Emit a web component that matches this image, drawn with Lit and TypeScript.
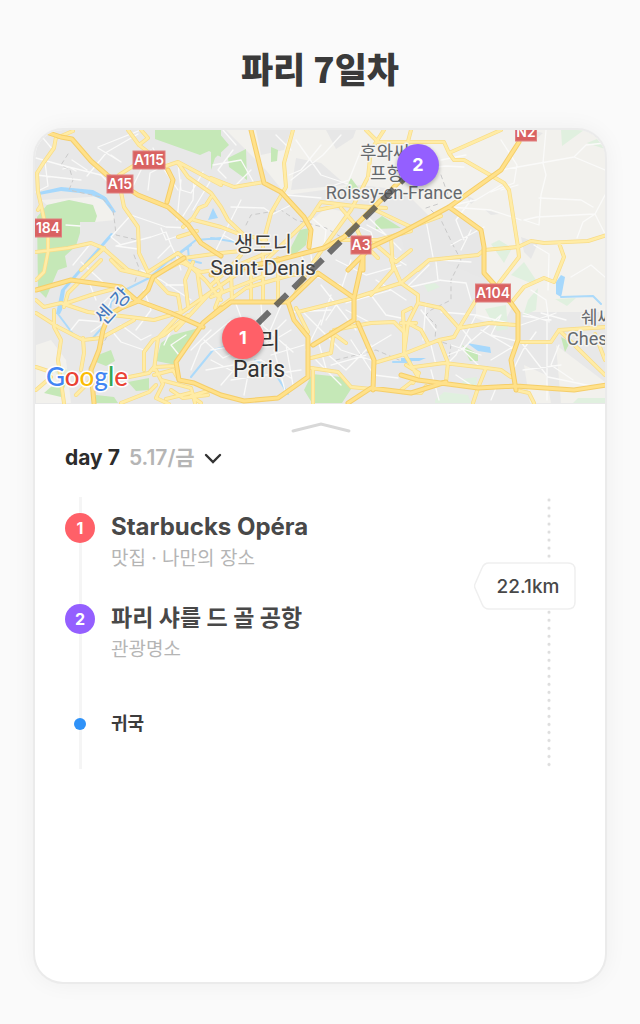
import { LitElement, html, svg, css } from "lit";
import { customElement, property } from "lit/decorators.js";

const MAJOR =
  "M48,133L60,137L71,139L90,161L106,175L137,195L167,207L187,225L200,243L220,256" +
  "M35,290L70,280L120,287L135,300L170,313L202,327" +
  "M183,258L152,277L147,290L135,302L120,308L108,315L102,330L98,350L90,370L93,403" +
  "M220,308L202,323L175,362L178,380L193,383L220,395L243,401L277,398L307,377L307,337L293,320L287,302L230,302L210,317" +
  "M287,302L317,273L353,298M353,298L353,320L312,345M362,258L353,298" +
  "M400,180L370,210L343,237L323,248L277,260L210,275" +
  "M518,142L500,170L448,207L400,233L370,247L347,270" +
  "M448,207L480,230L483,247L483,273L510,303L517,313L517,340L510,360L515,390" +
  "M347,403L370,388L410,393L445,382M400,375L417,380L477,388L515,386L573,390L606,385" +
  "M357,323L373,360L372,390M250,130L263,183L280,192L303,217L310,230L308,247M362,243L362,270" +
  "M167,170L172,180L166,202";

const MINOR =
  "M72,131L58,137M55,137L53,148L43,162L36,173L37,192L40,205L37,210M40,205L47,237L47,252L43,272L35,280" +
  "M127,130L138,145L147,152M140,130L147,138L138,145M118,175L137,163M120,192L123,207L137,227L138,253L147,272" +
  "M165,166L177,162L220,185M177,163L187,177L210,193L220,207L227,220L243,235L265,240" +
  "M210,197L205,205L198,208L192,218L182,227M193,220L220,227L243,236M196,231L177,237" +
  "M35,252L67,248L90,243L102,248L127,270L152,277M103,248L80,270M147,272L177,253L183,258L220,253L250,250" +
  "M100,260L67,293L63,307M35,300L43,307L60,303L87,312L153,320L180,312M35,313L57,327L82,340L100,338L133,320" +
  "M110,260L120,270L152,277M63,304L90,295L120,287" +
  "M152,277L167,293L177,295L180,313L157,338L153,370M220,285L180,313M183,260L205,281L220,300" +
  "M160,272L180,262L200,272L230,268L268,252M187,306L184,280L192,262M200,298L196,270M175,330L210,292L245,268M214,276L221,290L214,308" +
  "M128,377L148,373L153,367L175,366M152,340L143,352L143,370M152,340L163,335L187,315M82,338L83,353L80,370" +
  "M53,310L53,327L60,340L57,360L63,403M35,367L50,372M35,390L50,377M155,370L162,384L155,398L168,404M160,380L190,388L194,403M170,390L182,398L207,395M165,399L189,393M153,375L172,370L178,380" +
  "M210,178L233,187L263,182M292,130L283,163L285,187L270,213L262,243L262,260L262,302" +
  "M210,297L253,280L265,275M250,266L250,302M277,258L277,300M230,270L231,302M210,285L227,270L240,255M215,310L245,288L290,275L317,273" +
  "M365,130L377,142L400,142L443,142L448,153L500,130M383,130L370,150L367,177L350,210L323,247L307,270L292,298" +
  "M267,258L310,217L320,202L370,208L410,227L440,216M317,210L340,205L385,208" +
  "M340,208L353,223L362,243M337,240L377,240L410,231M373,243L395,262L410,250M390,237L392,270L370,295M362,243L377,258" +
  "M410,130L404,153M448,153L453,160L463,160L503,183L508,190L517,247L518,257L498,283" +
  "M417,270L428,260L477,255L483,250L517,247L530,241L543,243L587,241L606,235M558,243L563,257L553,282L543,278L523,287L510,303" +
  "M390,260L400,283L417,295L417,303L407,323L403,353L417,377L400,390M428,260L400,283L353,298L297,312" +
  "M417,303L440,308L458,328L453,337L438,340L400,355L373,363M475,300L458,328L488,323L515,325" +
  "M330,332L345,343M333,330L370,323L393,322L403,332L403,355M410,308L402,312L403,332M407,323L420,330L427,343M400,323L415,323" +
  "M310,358L330,353L333,330M310,368L337,372L350,387L370,389M312,368L312,403M295,308L307,332" +
  "M520,342L550,342L558,330L606,327M558,330L604,375M594,334L604,360M515,390L528,393L533,403" +
  "M413,367L443,363L485,368L500,370L510,377M485,368L477,388L472,403M438,340L447,363L445,382M400,392L420,393L425,386" +
  "M412,383L418,373L405,365M210,390L190,396L200,403M120,403L148,392L155,385M90,380L75,395";

const STREETS =
  "M42,138L52,150M35,158L60,165L100,175L106,181M35,192L47,186L44,162M97,147L140,130M97,148L120,162L110,155M86,176L106,152L137,134M62,169L68,167L75,171M150,150L130,190M152,148L160,165L177,190M147,190L149,173L168,163M177,163L180,190L190,193L202,172M176,220L180,180M182,216L192,200L193,180M210,180L192,210M35,175L80,180M110,237L130,215L165,227L190,228M115,246L150,237L165,232L170,245L157,258M115,246L137,249M110,237L120,245M170,245L177,260L180,270M160,228L165,240L180,235M79,226L65,225M71,160L86,170M72,265L90,243M80,262L105,285" +
  "M110,300L100,325L90,332M110,330L120,342L143,350M120,325L140,340L150,335M143,290L150,310L135,330M165,285L185,285M163,345L170,330M100,305L115,290M140,270L160,280L190,300M185,335L170,345L178,355M210,330L190,350M95,300L88,282M70,330L78,320L103,322M203,340L222,358L240,350M210,360L235,373M205,370L260,360L290,378M190,370L200,345L230,320M235,304L241,320M260,304L262,326L292,352M290,330L265,345M285,320L270,335M270,355L303,345M267,345L260,325M280,305L263,345M230,380L300,370M220,385L250,350M243,395L248,370M273,350L285,394M285,345L292,385M210,350L240,345" +
  "M295,140L320,175L350,185M320,145L300,170L288,175M340,135L322,155L290,180M360,150L348,180L325,188M270,215L290,205M275,135L290,150M285,195L320,198M240,200L215,250M250,170L233,187M253,183L240,160L212,165M235,145L222,130M232,150L217,170L225,178M230,207L263,208L270,213M222,235L250,250M310,217L325,230L323,247M350,223L370,232L373,243M366,225L385,235M365,215L400,250M300,255L310,275L340,285M310,255L312,270M335,260L365,275L400,265M380,250L405,265M370,295L385,315L400,318M375,280L405,300M345,310L370,323M320,285L355,330M300,310L340,350L370,360M320,320L305,350M290,312L330,310M345,303L390,290M330,295L320,325M340,290L350,260M325,353L345,370L370,345M365,355L330,365M317,340L326,372M350,340L373,375L397,378M315,360L340,385M390,335L365,350M335,305L325,320" +
  "M427,168L445,166L463,167M440,160L465,155M500,170L545,162L573,157L604,170M500,140L516,165L513,183L490,192M573,157L585,145L604,143M545,130L542,163L545,175L540,195L538,225L523,220M538,198L580,200L592,207M523,220L536,217L594,214L604,234M594,214L582,222L576,238M604,195L594,214M448,207L490,210L520,220M453,205L475,200L500,185M517,185L500,190M470,200L455,220L463,240M425,220L432,257M483,227L450,245M470,230L460,250M440,260L470,262M533,245L548,254L547,290M435,262L437,280L465,283M428,265L405,288L440,280M465,283L470,300M475,290L490,282M530,290L545,300L548,322M522,313L546,321M522,316L550,320M500,315L490,335L520,342M458,325L470,340L462,350L480,368M440,312L475,315L515,325M475,315L455,355L447,363M500,315L460,350L447,355M480,330L515,350M546,320L546,400M520,342L547,377L595,387M535,332L522,350L512,370M558,345L550,365L572,380M522,370L560,365M450,345L480,355M570,277L590,265L604,277M540,313L565,320M520,325L555,313M490,360L520,342M430,345L435,365M420,310L435,330M425,303L422,340M430,370L438,400M495,388L490,400M455,375L470,385";

const PARKS =
  "M154,130H220V157L208,151L199,155L154,139Z M36,217L46,205L68,200L92,205L96,216L94,222L79,222L79,233L75,246L64,256L66,267L57,270L45,298L37,290Z" +
  "M227,158L245,149L246,180L228,167Z M270,147L277,150L276,161L270,162Z M210,130L218,133L228,145L214,158L210,170Z M350,178L359,190L345,188Z M299,230L308,228L305,245L292,256L288,251Z" +
  "M374,221L381,216L400,228L375,229Z M311,374L340,377L352,386L341,403H311L303,390Z M171,335L202,327L175,365L155,361L160,343Z M127,382L148,378V390L135,391Z M97,355L110,350L114,361L105,366L95,362Z M51,386L65,383L60,397L43,393Z M461,345L477,354V361H469Z M560,337L569,342L564,352Z M95,395L113,397L117,403H95Z";
const PARKS_PALE =
  "M560,130H583L561,146Z M586,143L596,139L604,149Z M510,275L523,262L535,280L532,284Z M484,309L505,305L507,329L496,331L491,322Z M527,300L537,288L535,310L522,316Z M423,285L434,283L439,287L427,292Z M434,400L443,392L467,395L470,403H434Z M554,299L575,298L566,306Z M572,403L577,398H604V403Z M490,244L498,240L511,248L503,263Z M462,379L476,377L475,388L460,388Z M50,368L70,370L60,378Z";
const RURAL =
  "M225,130H605V312H520L475,268L482,233L448,207L430,218L402,190L360,185L285,195L265,170Z M305,225L325,208L345,212L322,248L310,250Z M40,200L105,196L114,220L94,222L92,205L68,200L46,205Z M35,345L50,340L65,360L70,403H35Z M475,290L515,300L500,328L475,318Z M523,365L545,375L550,403H529Z M555,345L604,382V403H560Z";
const BLOCKS =
  "M255,130H290L283,150L260,155Z M325,130H355L352,138L335,149Z M400,235L448,210L482,230L484,280L440,260L410,285Z M295,158L320,163L345,185L290,190Z M483,209L498,214L490,215Z M520,237L537,243L530,259L523,252Z M530,130L542,133L534,140Z M465,195L475,200L470,204Z";
const WATER =
  "M38,192L60,187L92,190L105,197L115,212L112,213L102,200L88,194L60,191L38,195Z M207,220L212,208L217,218Z M466,343L489,347L490,353L477,351Z M555,282L560,275L564,277L561,293L560,297L555,294Z M400,358L425,358L418,361H400Z M55,314L60,290L110,233L113,234L64,290L61,310L59,314Z";
const RIVERS =
  "M57,314L72,334M90,340L108,320L110,302L120,292L148,278L165,263L195,240L220,238M187,248L188,260L200,263M190,377L212,350L224,347M254,360L272,370L287,394M560,297L592,296L600,304M210,238L235,242M392,362H410M170,260L190,245";
const RAIL =
  "M67,154L60,165L69,170L72,180L68,190L100,197L112,210L114,225L115,235L137,240M133,255L138,268L133,285M110,330L95,355L88,368M245,225L250,215L280,210L295,220L325,228L345,240M430,210L440,220L452,245L460,260L450,280L450,300L430,310L425,315L435,325L434,340L450,345L447,365M335,360L375,350L398,360M440,175L447,195M425,208L440,203";

interface Stop {
  order: number;
  name: string;
  kind: string;
  tone: string;
}

@customElement("route-map")
class RouteMap extends LitElement {
  static styles = css`
    :host { display: block; }
    .map { display: block; width: 100%; height: 274px; }
    .fill { stroke: none; }
    .line { fill: none; stroke-linejoin: round; stroke-linecap: round; }
    .label { font-family: Roboto, "Noto Sans CJK KR", sans-serif; text-anchor: middle; paint-order: stroke; stroke: #f5f4f1; stroke-width: 3px; stroke-linejoin: round; }
    .start { text-anchor: start; }
    .city { fill: #3c3c3c; font-size: 21px; }
    .capital { fill: #333; font-size: 23px; }
    .town { fill: #65696d; font-size: 18px; }
    .river { fill: #4478bd; font-size: 20px; }
    .shield { fill: #d96262; stroke: #e08080; stroke-width: 1px; }
    .code { font: 600 14px Inter, sans-serif; fill: #fff; text-anchor: middle; }
    .pin { filter: drop-shadow(0 2px 2px rgba(0, 0, 0, 0.3)); }
    .pin-number { font: 700 18px Inter, sans-serif; fill: #fff; text-anchor: middle; }
    .logo { font: 500 26px Lato, sans-serif; paint-order: stroke; stroke: #fff; stroke-width: 3px; stroke-linejoin: round; }
  `;

  private shield(x: number, y: number, width: number, code: string) {
    return svg`<g>
      <rect class="shield" x=${x - width / 2} y=${y - 9} width=${width} height="18"></rect>
      <text class="code" x=${x} y=${y + 5}>${code}</text>
    </g>`;
  }

  private pin(x: number, y: number, order: number, color: string) {
    return svg`<g>
      <circle class="pin" cx=${x} cy=${y} r="21" fill=${color}></circle>
      <text class="pin-number" x=${x} y=${y + 6}>${order}</text>
    </g>`;
  }

  render() {
    return html`<svg class="map" viewBox="34 130 570 274" preserveAspectRatio="xMidYMid slice" role="img" aria-label="파리 지도">
      <rect x="-400" y="-200" width="1500" height="1000" fill="#e8e8e8"></rect>
      <path class="fill" fill="#f2f1ed" d=${RURAL}></path>
      <path class="fill" fill="#e7e7e7" d=${BLOCKS}></path>
      <path class="fill" fill="#e0f0df" d=${PARKS_PALE}></path>
      <path class="fill" fill="#c5e8b7" d=${PARKS}></path>
      <path class="fill" fill="#a6d8fc" d=${WATER}></path>
      <path class="line" stroke="#acdafa" stroke-width="2" d=${RIVERS}></path>
      <path class="line" stroke="#c9c9c9" stroke-width="1" stroke-dasharray="4 4" d=${RAIL}></path>
      <path class="line" stroke="#fafaf9" stroke-width="1.3" d=${STREETS}></path>
      <path class="line" stroke="#f8dc88" stroke-width="4" d=${MINOR}></path>
      <path class="line" stroke="#ffeca6" stroke-width="2.6" d=${MINOR}></path>
      <path class="line" stroke="#f5ce6a" stroke-width="5" d=${MAJOR}></path>
      <path class="line" stroke="#ffe18a" stroke-width="3" d=${MAJOR}></path>
      ${this.shield(148, 160, 32, "A115")}
      ${this.shield(119, 184, 26, "A15")}
      ${this.shield(47, 228, 27, "184")}
      ${this.shield(360, 245, 20, "A3")}
      ${this.shield(525, 132, 21, "N2")}
      ${this.shield(492, 293, 35, "A104")}
      <text class="label city" x="262" y="251">생드니</text>
      <text class="label city" x="262" y="275">Saint-Denis</text>
      <text class="label capital" x="258" y="349">파리</text>
      <text class="label capital" x="258" y="377">Paris</text>
      <text class="label town start" x="359" y="159">후와씨</text>
      <text class="label town start" x="369" y="180">프헝스</text>
      <text class="label town" x="393" y="199">Roissy-en-France</text>
      <text class="label town start" x="580" y="324">쉐씨</text>
      <text class="label town start" x="566" y="345">Chessy</text>
      <text class="label river" transform="translate(117 311) rotate(-48)">센 강</text>
      <path d="M242,338L417,165" fill="none" stroke="#4b4b4b" stroke-opacity="0.78" stroke-width="6" stroke-dasharray="16 9" stroke-dashoffset="4"></path>
      <text class="logo" x="45" y="386"><tspan fill="#4285f4">G</tspan><tspan fill="#ea4335">o</tspan><tspan fill="#fbbc05">o</tspan><tspan fill="#4285f4">g</tspan><tspan fill="#34a853">l</tspan><tspan fill="#ea4335">e</tspan></text>
      ${this.pin(242, 338, 1, "#ff6068")}
      ${this.pin(417, 165, 2, "#945fff")}
    </svg>`;
  }
}

@customElement("day-timeline")
class DayTimeline extends LitElement {
  @property({ attribute: false }) stops: Stop[] = [];

  static styles = css`
    :host { display: flex; justify-content: space-between; align-items: stretch; }
    .stops { flex: 1; margin: 1px 0 0; padding: 13px 0 33px; list-style: none; background: linear-gradient(#f5f5f5, #f5f5f5) 14px 0 / 3px 100% no-repeat; }
    .stop { display: grid; grid-template-columns: 30px 1fr; column-gap: 16px; align-items: center; margin-bottom: 29px; }
    .badge { width: 30px; height: 30px; border-radius: 50%; display: grid; place-items: center; color: #fff; font-size: 16px; line-height: 30px; font-weight: 700; margin-top: 2px; }
    .coral { background: #ff6068; }
    .violet { background: #945fff; }
    .name { margin: 0; font-size: 24px; line-height: 34px; font-weight: 700; color: #484848; }
    .name:lang(ko) { font-size: 23px; }
    .kind { grid-column: 2; margin: 0; font-size: 19px; line-height: 30px; margin-bottom: -2px; color: #b5b5b5; }
    .end { display: grid; grid-template-columns: 30px 1fr; column-gap: 16px; align-items: center; margin-top: 49px; font-size: 18px; line-height: 24px; font-weight: 700; color: #3c3c3c; }
    .dot { width: 12px; height: 12px; border-radius: 50%; background: #2f92f8; justify-self: center; }
    .legs { width: 102px; padding-top: 66px; background: radial-gradient(circle, #dedede 1px, transparent 2px) 73px 0 / 4px 8px; background-repeat: no-repeat round; }
    .distance { position: relative; height: 48px; display: grid; place-items: center; padding-left: 6px; font-size: 19px; font-weight: 500; color: #484848; }
    .tag { position: absolute; inset: 0; width: 100%; height: 100%; }
    .value { position: relative; }
  `;

  render() {
    return html`
      <ol class="stops">
        ${this.stops.map(
          (stop) => html`<li class="stop">
            <span class="badge ${stop.tone}">${stop.order}</span>
            <h3 class="name" lang=${/[가-힣]/.test(stop.name) ? "ko" : "fr"}>${stop.name}</h3>
            <p class="kind">${stop.kind}</p>
          </li>`
        )}
        <li class="end"><span class="dot"></span><span>귀국</span></li>
      </ol>
      <div class="legs">
        <div class="distance">
          <svg class="tag" viewBox="0 0 102 48" aria-hidden="true">
            <path d="M15 1H94Q101 1 101 8V40Q101 47 94 47H15Q10 47 8 42L1 26Q0 24 1 22L8 6Q10 1 15 1Z" fill="#fff" stroke="#efefef" stroke-width="1.5"></path>
          </svg>
          <span class="value">22.1km</span>
        </div>
      </div>
    `;
  }
}

@customElement("app-root")
class AppRoot extends LitElement {
  private stops: Stop[] = [
    { order: 1, name: "Starbucks Opéra", kind: "맛집 · 나만의 장소", tone: "coral" },
    { order: 2, name: "파리 샤를 드 골 공항", kind: "관광명소", tone: "violet" },
  ];

  static styles = css`
    :host { display: flex; flex-direction: column; min-height: 100vh; box-sizing: border-box; padding: 38px 35px 40px; background: #fafafa; font-family: Inter, "Noto Sans CJK KR", sans-serif; }
    .title { margin: 0 0 30px; text-align: center; font-family: "Noto Sans CJK KR", sans-serif; font-size: 35px; line-height: 60px; font-weight: 900; color: #3a3a3a; }
    .card { flex: 1; background: #fff; border-radius: 28px; overflow: hidden; box-shadow: 0 0 0 2px #ebebeb, 0 0 24px rgba(0, 0, 0, 0.06); margin: 2px 0; }
    .sheet { padding: 0 29px 0 30px; }
    button { border: 0; padding: 0; background: none; font: inherit; cursor: pointer; }
    .handle { display: block; margin: 0 auto; height: 41px; width: 60px; }
    .handle-icon { display: block; margin-top: 4px; }
    .day { display: flex; align-items: center; gap: 9px; height: 26px; font-size: 21px; line-height: 26px; font-weight: 700; color: #2c2c2c; margin-bottom: 25px; }
    .date { color: #b5b5b5; font-weight: 600; }
  `;

  render() {
    return html`
      <h1 class="title">파리 7일차</h1>
      <main class="card">
        <route-map></route-map>
        <section class="sheet">
          <button class="handle" aria-label="지도 접기">
            <svg class="handle-icon" width="60" height="12" viewBox="0 0 60 12"><path d="M2 10L30 3L58 10" fill="none" stroke="#d8d8d8" stroke-width="3" stroke-linecap="round"></path></svg>
          </button>
          <button class="day" aria-haspopup="listbox">
            <span>day 7</span><span class="date">5.17/금</span>
            <svg width="18" height="14" viewBox="0 0 18 14" aria-hidden="true"><path d="M2 4L9 11L16 4" fill="none" stroke="#333" stroke-width="2.4" stroke-linecap="round"></path></svg>
          </button>
          <day-timeline .stops=${this.stops}></day-timeline>
        </section>
      </main>
    `;
  }
}
